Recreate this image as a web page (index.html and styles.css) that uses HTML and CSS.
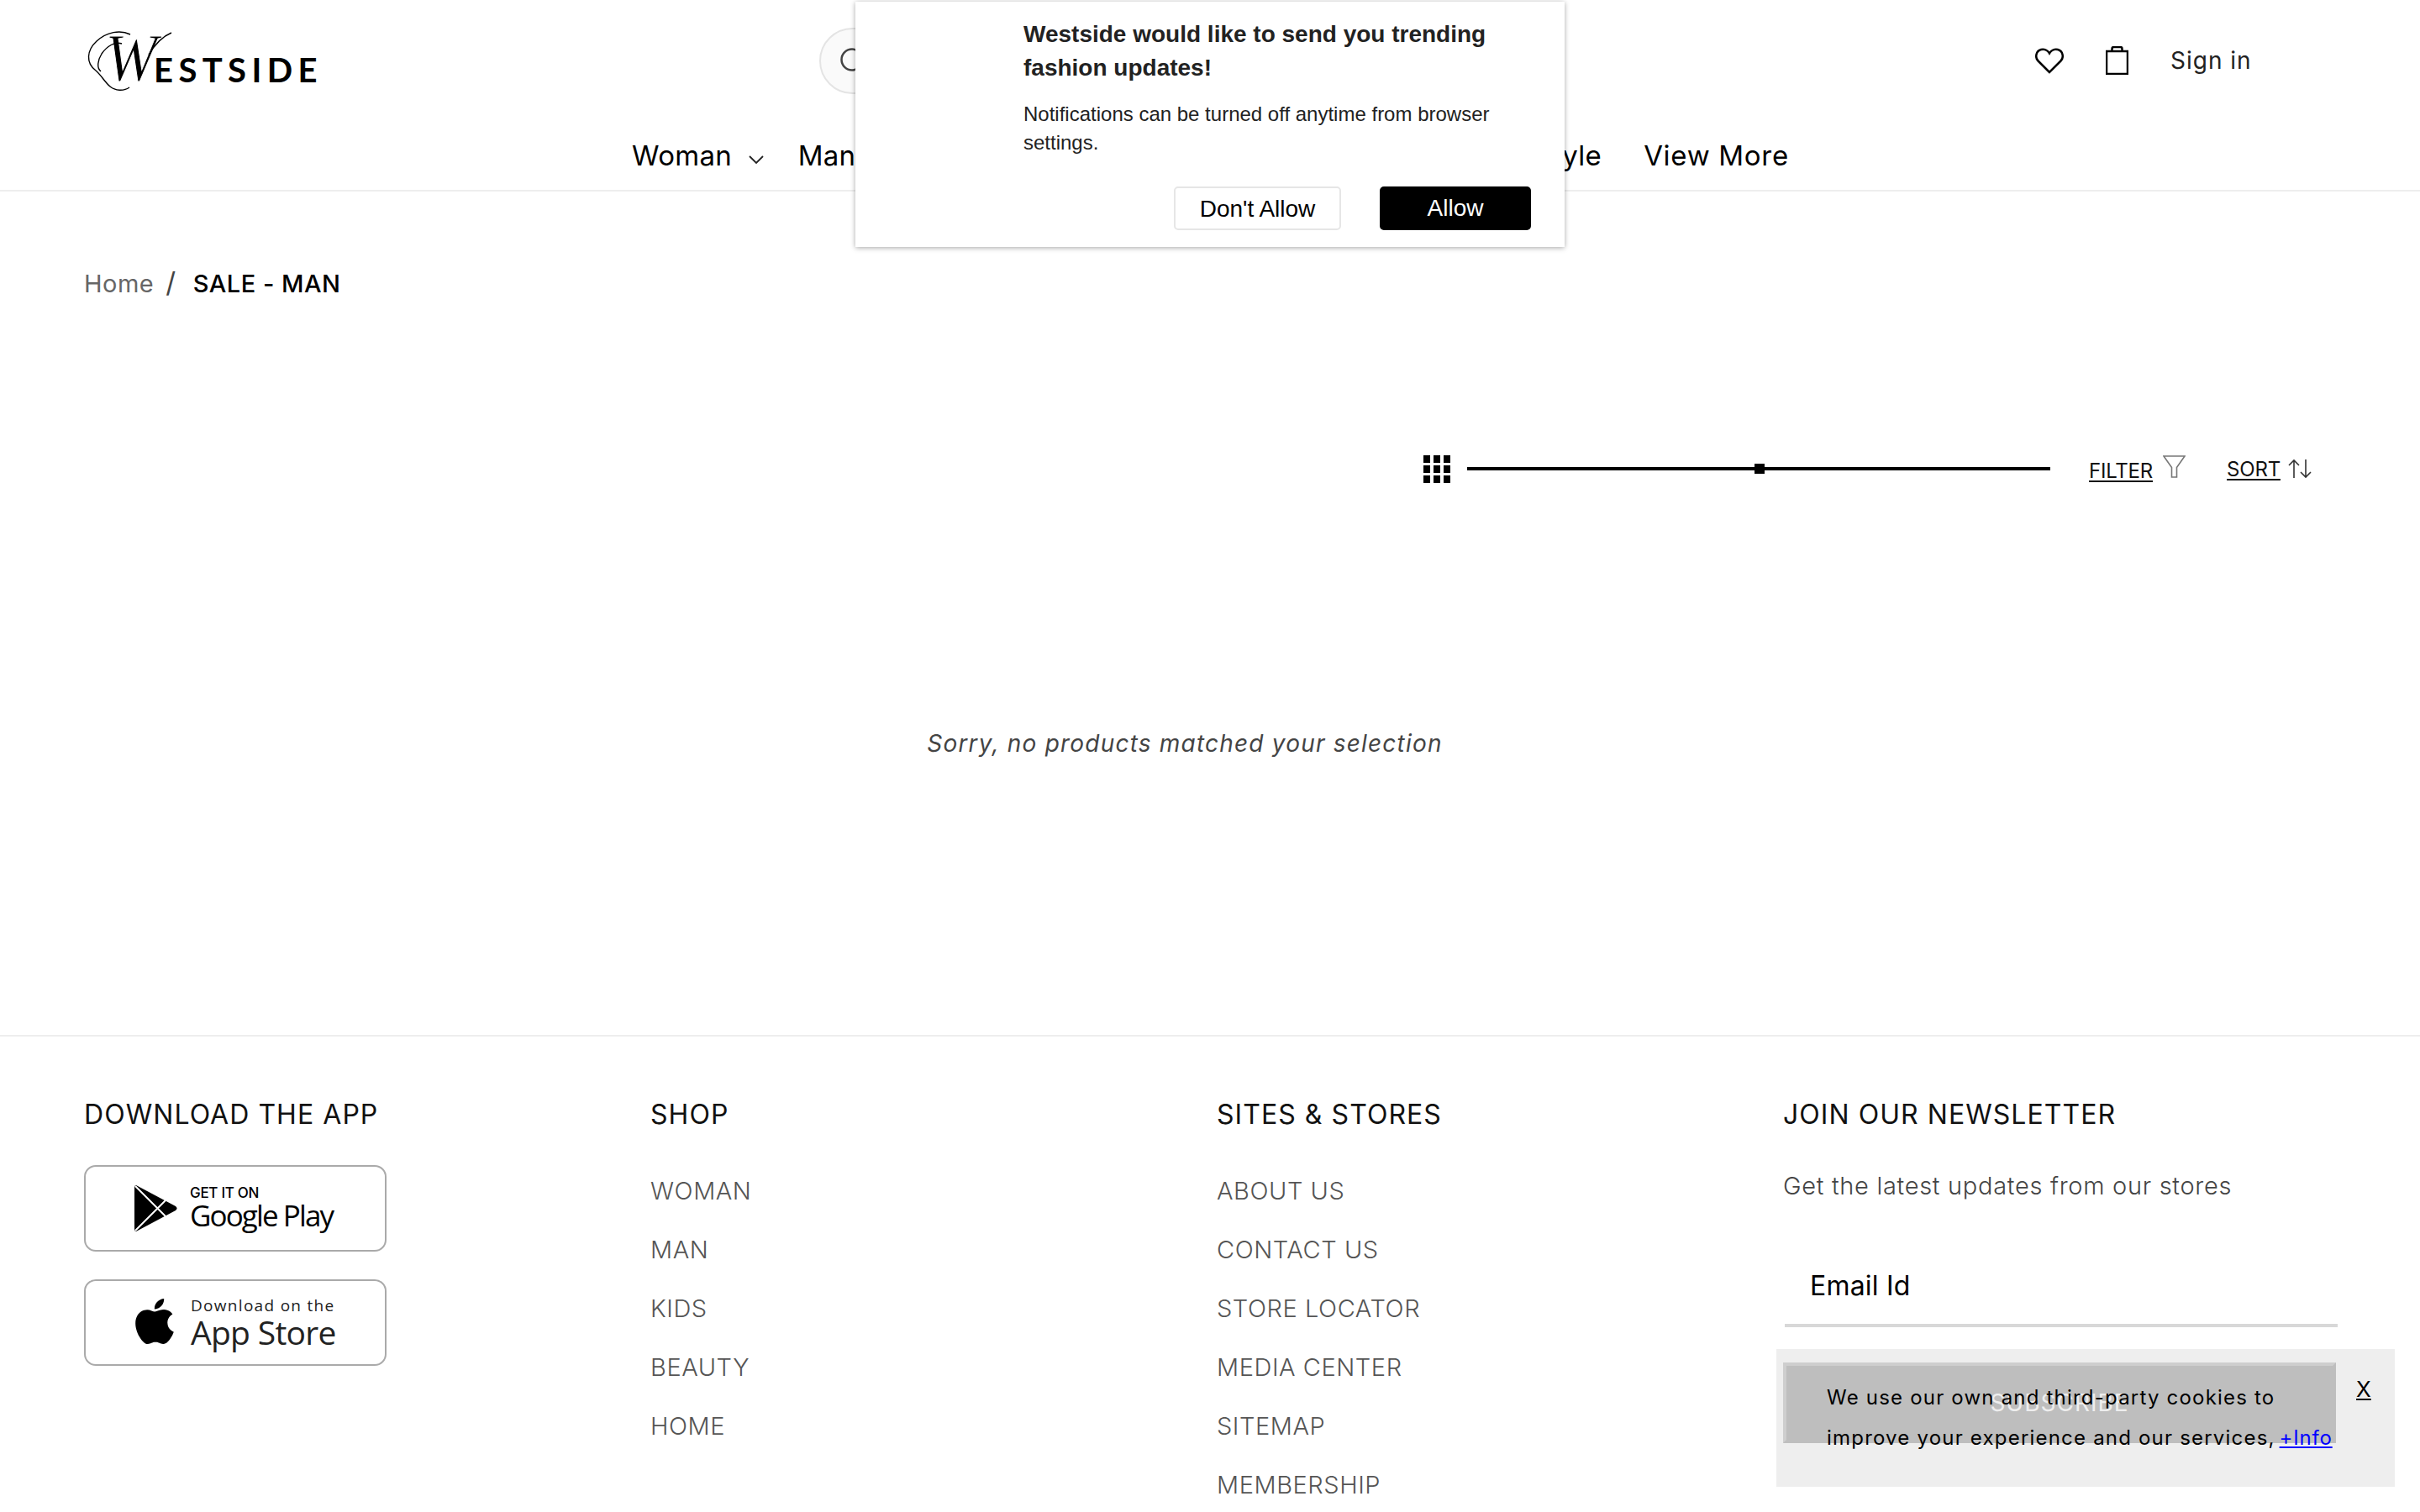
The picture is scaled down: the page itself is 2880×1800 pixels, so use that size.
FILE: index.html
```html
<!DOCTYPE html>
<html>
<head>
    <title>Westside - Sale Man</title>
    <link rel="stylesheet" href="styles.css">
</head>
<body>
<div class="page">
    <header class="header">
        <div class="topbar">
            <a class="logo">
                <svg width="300" height="95" viewBox="0 0 300 95">
                    <text class="logoW" x="30" y="71" textLength="62" lengthAdjust="spacingAndGlyphs">W</text>
                    <path class="logoSwash" d="M60 16C48 10 32 13 20 24C8 35 7 50 19 59C26 65 29 72 36 78C42 83 52 84 59 79"/>
                    <path class="logoSwash" d="M50 27C42 24 32 30 26 39C21 47 20 56 25 60"/>
                    <path class="logoSwash" d="M82 40C88 30 97 19 109 14"/>
                    <text class="logoText" x="88" y="73">ESTSIDE</text>
                </svg>
            </a>
            <div class="search">
                <svg width="34" height="34" viewBox="0 0 34 34"><circle cx="14" cy="14" r="12.5"/><path d="M23 23l9 9"/></svg>
            </div>
            <div class="account">
                <svg class="heart" width="34" height="31" viewBox="0 0 34 31"><path d="M17 29L3.5 15.5C-.5 11.5 1 3.5 7 2C11 1 15 3 17 6.500C19 3 23 1 27 2C33 3.500 34.500 11.500 30.500 15.500Z"/></svg>
                <svg class="bag" width="27" height="34" viewBox="0 0 27 34"><path d="M1 6h25v27H1zM7.500 6V3q0-2 2-2h8q2 0 2 2v3"/></svg>
                <a class="signIn">Sign in</a>
            </div>
        </div>
        <ul class="nav">
            <li>Woman <svg class="chevron" width="18" height="10" viewBox="0 0 18 10"><path d="M1 1l8 8 8-8"/></svg></li>
            <li>Man <svg class="chevron" width="18" height="10" viewBox="0 0 18 10"><path d="M1 1l8 8 8-8"/></svg></li>
            <li class="navWide">Kids</li>
            <li class="navWide">Beauty</li>
            <li class="navWide">Home</li>
            <li class="navWide">Footwear</li>
            <li>Lifestyle</li>
            <li class="navLast">View More</li>
        </ul>
    </header>

    <div class="breadcrumb">
        <a class="crumbHome">Home</a><span class="crumbSep">/</span><span class="crumbNow">SALE - MAN</span>
    </div>

    <div class="toolbar">
        <div class="gridIcon"><i></i><i></i><i></i><i></i><i></i><i></i><i></i><i></i><i></i></div>
        <div class="slider"><span class="thumb"></span></div>
        <a class="filter">FILTER</a>
        <svg class="filterIcon" width="27" height="27" viewBox="0 0 27 27"><path d="M1 1h25L16.500 14.500V26h-6V14.500Z"/></svg>
        <a class="sort">SORT</a>
        <svg class="sortIcon" width="30" height="24" viewBox="0 0 30 24"><path d="M8 23V2M2 8l6-6 6 6M22 1v21M16 16l6 6 6-6"/></svg>
    </div>

    <p class="empty">Sorry, no products matched your selection</p>

    <footer class="footer">
        <div class="col">
            <h4>DOWNLOAD THE APP</h4>
            <a class="badge playBadge">
                <svg width="51" height="55" viewBox="0 0 51 55">
                    <path d="M2 0L49 25Q52 27.500 49 30L2 55Q0 55 0 52V3Q0 0 2 0Z"/>
                    <path class="playCut" d="M1 1l36 36M1 54l36-36"/>
                </svg>
                <span class="badgeText playText">
                    <span class="playSmall">GET IT ON</span>
                    <span class="playBig">Google Play</span>
                </span>
            </a>
            <a class="badge storeBadge">
                <svg class="appleIcon" width="56" height="54" viewBox="0 0 24 24" preserveAspectRatio="none"><path d="M12.152 6.896c-.948 0-2.415-1.078-3.960-1.040-2.040.027-3.910 1.183-4.961 3.014-2.117 3.675-.546 9.103 1.519 12.090 1.013 1.454 2.208 3.090 3.792 3.039 1.520-.065 2.090-.987 3.935-.987 1.831 0 2.350.987 3.960.948 1.637-.026 2.676-1.480 3.676-2.948 1.156-1.688 1.636-3.325 1.662-3.415-.039-.013-3.182-1.221-3.220-4.857-.026-3.040 2.480-4.494 2.597-4.559-1.429-2.090-3.623-2.324-4.390-2.376-2-.156-3.675 1.090-4.610 1.090zM15.530 3.830c.843-1.012 1.400-2.427 1.245-3.830-1.207.052-2.662.805-3.532 1.818-.780.896-1.454 2.338-1.273 3.714 1.338.104 2.715-.688 3.559-1.701"/></svg>
                <span class="badgeText storeText">
                    <span class="storeSmall">Download on the</span>
                    <span class="storeBig">App Store</span>
                </span>
            </a>
        </div>
        <div class="col">
            <h4>SHOP</h4>
            <ul class="links">
                <li>WOMAN</li>
                <li>MAN</li>
                <li>KIDS</li>
                <li>BEAUTY</li>
                <li>HOME</li>
            </ul>
        </div>
        <div class="col">
            <h4>SITES &amp; STORES</h4>
            <ul class="links">
                <li>ABOUT US</li>
                <li>CONTACT US</li>
                <li>STORE LOCATOR</li>
                <li>MEDIA CENTER</li>
                <li>SITEMAP</li>
                <li>MEMBERSHIP</li>
            </ul>
        </div>
        <div class="col">
            <h4>JOIN OUR NEWSLETTER</h4>
            <p class="newsText">Get the latest updates from our stores</p>
            <div class="emailRow">Email Id</div>
            <button class="subscribe">SUBSCRIBE</button>
        </div>
    </footer>

    <div class="notifyPopup">
        <h3>Westside would like to send you trending fashion updates!</h3>
        <p>Notifications can be turned off anytime from browser settings.</p>
        <div class="notifyButtons">
            <a class="btnDeny">Don't Allow</a>
            <a class="btnAllow">Allow</a>
        </div>
    </div>

    <div class="cookieBox">
        <p>We use our own and third-party cookies to improve your experience and our services, <a>+Info</a></p>
        <a class="cookieClose">X</a>
    </div>
</div>
</body>
</html>
```

FILE: styles.css
```css
html, body {
    margin: 0px;
    padding: 0px;
    background: #fff;
}

.page {
    position: relative;
    height: 1800px;
    overflow: hidden;
    font-family: Inter, "Liberation Sans", sans-serif;
    color: #000;
}

ul {
    list-style-type: none;
    margin: 0px;
    padding: 0px;
}

/* header */
.header {
    height: 226px;
    border-bottom: 2px solid #eee;
}

.topbar {
    height: 144px;
    display: flex;
    align-items: center;
    padding-left: 95px;
}

.logo {
    display: block;
    height: 95px;
}

.logoW {
    font-family: "Liberation Serif", serif;
    font-style: italic;
    font-size: 80px;
    fill: #000;
    stroke: #fff;
    stroke-width: 1px;
}

.logoSwash {
    fill: none;
    stroke: #000;
    stroke-width: 1.4px;
}

.logoText {
    font-family: Lato, Inter, sans-serif;
    font-weight: 700;
    font-size: 40px;
    letter-spacing: 6.4px;
    fill: #000;
}

.search {
    box-sizing: border-box;
    width: 875px;
    height: 79px;
    margin-left: 580px;
    padding: 22px 0px 0px 23px;
    background: #fafafa;
    border: 2px solid #e4e4e4;
    border-radius: 40px;
}

.search svg {
    display: block;
    fill: none;
    stroke: #444;
    stroke-width: 2.5px;
}

.account {
    display: flex;
    align-items: center;
    margin-left: 572px;
}

.heart, .bag {
    fill: none;
    stroke: #000;
    stroke-width: 2.5px;
}

.bag {
    margin-left: 50px;
}

.signIn {
    margin-left: 50px;
    font-size: 28px;
    letter-spacing: 1px;
    color: #222;
}

.nav {
    height: 82px;
    display: flex;
    align-items: center;
    gap: 41px;
    padding-left: 752px;
    font-size: 33px;
    letter-spacing: 0.300px;
}

.navWide {
    margin-left: 22px;
}

.navLast {
    margin-left: 9px;
    letter-spacing: 0.700px;
}

.chevron {
    fill: none;
    stroke: #222;
    stroke-width: 1.8px;
    margin-left: 10px;
    vertical-align: 2px;
}

/* breadcrumb */
.breadcrumb {
    margin-top: 88px;
    padding-left: 100px;
    line-height: 40px;
    font-size: 29px;
    letter-spacing: 0.500px;
}

.crumbHome {
    color: #666;
}

.crumbSep {
    margin: 0px 20px 0px 14px;
    font-size: 33px;
    color: #444;
}

.crumbNow {
    font-weight: 500;
}

/* grid size slider and filter, sort */
.toolbar {
    height: 40px;
    margin-top: 180px;
    padding-left: 1694px;
    display: flex;
    align-items: center;
    font-size: 24px;
    letter-spacing: -0.200px;
}

.gridIcon {
    display: grid;
    grid-template-columns: repeat(3, 8px);
    grid-auto-rows: 9px;
    gap: 3px 4px;
}

.gridIcon i {
    background: #000;
}

.slider {
    position: relative;
    width: 694px;
    height: 4px;
    margin-left: 20px;
    background: #000;
}

.thumb {
    position: absolute;
    left: 342px;
    top: -4px;
    width: 12px;
    height: 12px;
    background: #000;
}

.filter, .sort {
    text-decoration: underline;
    text-underline-offset: 3px;
    color: #111;
}

.filter {
    margin-left: 46px;
    margin-top: 4px;
}

.filterIcon {
    margin: -6px 0px 0px 12px;
    fill: none;
    stroke: #777;
    stroke-width: 1.6px;
}

.sort {
    margin-left: 49px;
}

.sortIcon {
    margin-left: 8px;
    fill: none;
    stroke: #333;
    stroke-width: 1.6px;
}

.empty {
    margin: 287px 0px 0px;
    padding-right: 60px;
    line-height: 40px;
    font-size: 28px;
    font-style: italic;
    letter-spacing: 1.200px;
    text-align: center;
    color: #444;
}

/* footer */
.footer {
    margin-top: 327px;
    padding: 73px 0px 0px 100px;
    border-top: 2px solid #eee;
    display: grid;
    grid-template-columns: repeat(4, 674px);
}

.footer h4 {
    margin: 0px;
    line-height: 40px;
    font-size: 32px;
    font-weight: 400;
    letter-spacing: 1.050px;
    color: #111;
}

.links {
    margin-top: 36px;
    line-height: 70px;
    font-size: 29px;
    font-weight: 300;
    letter-spacing: 0.550px;
    color: #555;
}

.badge {
    box-sizing: border-box;
    width: 360px;
    height: 103px;
    display: flex;
    align-items: center;
    padding-left: 58px;
    border: 2px solid #aaa;
    border-radius: 14px;
}

.playBadge {
    margin-top: 40px;
}

.storeBadge {
    margin-top: 33px;
    padding-left: 60px;
}

.playCut {
    fill: none;
    stroke: #fff;
    stroke-width: 2px;
}

.badgeText {
    display: flex;
    flex-direction: column;
}

.playText {
    margin-left: 15px;
    padding-bottom: 4px;
}

.playSmall {
    font-size: 17px;
    line-height: 20px;
    font-weight: 500;
    letter-spacing: -0.3px;
}

.playBig {
    font-family: "Open Sans", sans-serif;
    font-size: 35px;
    line-height: 34px;
    font-weight: 500;
    letter-spacing: -1.900px;
}

.appleIcon {
    margin: -4px 0px 0px -6px;
}

.storeText {
    margin-left: 15px;
}

.storeSmall {
    font-family: "Open Sans", sans-serif;
    font-size: 19px;
    line-height: 22px;
    letter-spacing: 1.300px;
    color: #222;
}

.storeBig {
    font-family: "Open Sans", sans-serif;
    font-size: 39px;
    line-height: 41px;
    font-weight: 500;
    letter-spacing: -0.700px;
    color: #222;
}

.newsText {
    margin: 45px 0px 0px;
    line-height: 40px;
    font-size: 29px;
    font-weight: 300;
    letter-spacing: 0.700px;
    color: #444;
}

.emailRow {
    box-sizing: border-box;
    width: 658px;
    height: 100px;
    margin: 48px 0px 0px 2px;
    padding-left: 30px;
    border-bottom: 4px solid #d8d8d8;
    line-height: 102px;
    font-size: 32px;
    letter-spacing: 0.200px;
    color: #000;
}

.subscribe {
    display: block;
    box-sizing: border-box;
    width: 658px;
    height: 96px;
    margin-top: 42px;
    background: #000;
    color: #fff;
    border-style: solid;
    border-width: 4px;
    border-color: #545454 #000 #000 #545454;
    font-family: Inter, sans-serif;
    font-size: 28px;
    font-weight: 400;
    letter-spacing: 1px;
}

/* notification prompt */
.notifyPopup {
    position: absolute;
    left: 1018px;
    top: 2px;
    width: 844px;
    height: 292px;
    box-sizing: border-box;
    padding: 19px 40px 0px 200px;
    background: #fff;
    box-shadow: 0px 1px 6px rgba(0, 0, 0, 0.35);
    font-family: "Liberation Sans", Arial, sans-serif;
    color: #222;
}

.notifyPopup h3 {
    margin: 0px;
    line-height: 40px;
    font-size: 28px;
    font-weight: 700;
}

.notifyPopup p {
    margin: 18px 0px 0px;
    line-height: 34px;
    font-size: 24px;
}

.notifyButtons {
    display: flex;
    justify-content: flex-end;
    gap: 46px;
    margin-top: 35px;
    font-size: 28px;
    text-align: center;
}

.btnDeny, .btnAllow {
    box-sizing: border-box;
    height: 52px;
    line-height: 52px;
    border-radius: 5px;
}

.btnDeny {
    width: 199px;
    border: 2px solid #e6e6e6;
    line-height: 50px;
    color: #000;
}

.btnAllow {
    width: 180px;
    background: #000;
    color: #fff;
}

/* cookie notice */
.cookieBox {
    position: absolute;
    left: 2114px;
    top: 1606px;
    width: 736px;
    height: 164px;
    box-sizing: border-box;
    padding: 34px 0px 0px 60px;
    display: flex;
    align-items: flex-start;
    background: rgba(234, 234, 234, 0.81);
    font-size: 24px;
    letter-spacing: 1.200px;
    color: #000;
}

.cookieBox p {
    width: 616px;
    flex-shrink: 0;
    margin: 0px;
    line-height: 48px;
}

.cookieBox p a {
    margin-left: -3px;
    color: #00f;
    letter-spacing: 0.800px;
    text-decoration: underline;
}

.cookieClose {
    margin-left: 14px;
    margin-top: -1px;
    font-size: 26px;
    line-height: 30px;
    letter-spacing: 0px;
    text-decoration: underline;
}
```
